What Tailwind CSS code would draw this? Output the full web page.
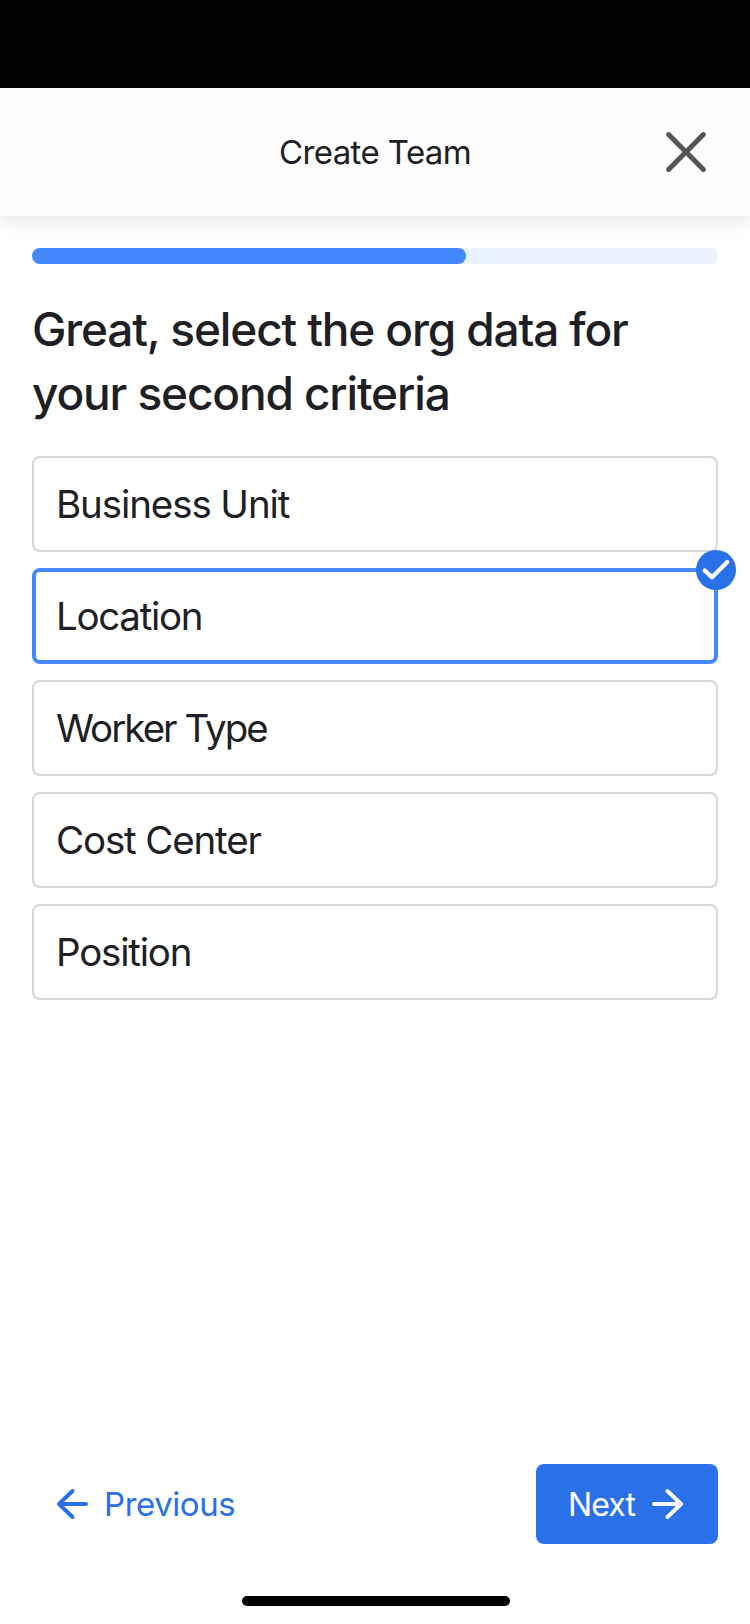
<!DOCTYPE html>
<html lang="en">
<head>
<meta charset="utf-8">
<title>Create Team</title>
<script src="https://cdn.jsdelivr.net/npm/@tailwindcss/browser@4"></script>
</head>
<body class="bg-white">
<div class="flex h-[1624px] w-[750px] flex-col overflow-hidden bg-white font-['Inter',sans-serif] text-[#202024]">
  <div class="h-[88px] shrink-0 bg-black"></div>
  <header class="grid h-32 shrink-0 grid-cols-[1fr_auto_1fr] items-center bg-[#fdfdfd] shadow-[0_8px_16px_rgba(0,0,0,0.08)]">
    <span></span>
    <h1 class="text-[33px] leading-10 tracking-[-0.6px]">Create Team</h1>
    <button class="mr-10 justify-self-end" aria-label="Close">
      <svg class="block size-12" viewBox="0 0 48 48" fill="none" stroke="#555558" stroke-width="5" stroke-linecap="round"><path d="M6.6 6.6 41.4 41.4M41.4 6.6 6.6 41.4"/></svg>
    </button>
  </header>
  <main class="flex flex-1 flex-col px-8 pt-8">
    <div class="h-4 rounded-full bg-[#eaf1ff]"><div class="h-4 w-[434px] rounded-full bg-[#4487ff]"></div></div>
    <h2 class="mt-[33px] text-[46px] leading-[64px] font-medium tracking-[-1.14px] whitespace-nowrap">Great, select the org data for<br>your second criteria</h2>
    <ul class="mt-[31px] flex flex-col gap-4 text-[38.5px]">
      <li class="flex h-24 items-center rounded-lg border-2 border-[#d5d5dc] px-[22px] pt-0.5"><span class="tracking-[-1.1px]">Business Unit</span></li>
      <li class="relative flex h-24 items-center rounded-lg border-4 border-[#4487ff] px-5 pt-0.5"><span class="tracking-[-1.3px]">Location</span>
        <svg class="absolute -top-[22px] -right-[22px] size-10" viewBox="0 0 40 40" fill="none"><circle cx="20" cy="20" r="20" fill="#2a70e8"/><path d="M8.700 20.600 16 27.200 31.300 12" stroke="#fff" stroke-width="4.300" stroke-linecap="round" stroke-linejoin="round"/></svg>
      </li>
      <li class="flex h-24 items-center rounded-lg border-2 border-[#d5d5dc] px-[22px] pt-0.5"><span class="tracking-[-1.95px]">Worker Type</span></li>
      <li class="flex h-24 items-center rounded-lg border-2 border-[#d5d5dc] px-[22px] pt-0.5"><span class="tracking-[-1.15px]">Cost Center</span></li>
      <li class="flex h-24 items-center rounded-lg border-2 border-[#d5d5dc] px-[22px] pt-0.5"><span class="tracking-[-1.2px]">Position</span></li>
    </ul>
  </main>
  <footer class="flex h-40 shrink-0 flex-col px-8">
    <div class="flex h-20 items-center justify-between">
      <button class="flex items-center gap-4 pl-6 text-[33px] text-[#2a70e8]">
        <svg class="block size-8" viewBox="0 0 32 32" fill="none" stroke="currentColor" stroke-width="4" stroke-linecap="round" stroke-linejoin="round"><path d="M30 16H3M16.500 3 3 16l13.500 13"/></svg>
        <span class="pt-0.5 tracking-[-0.45px]">Previous</span>
      </button>
      <button class="flex h-20 w-[182px] items-center justify-between rounded-lg bg-[#2a70e8] pr-[34px] pl-8 text-[32px] text-white">
        <span class="pt-0.5 tracking-[-0.9px]">Next</span>
        <svg class="block size-8" viewBox="0 0 32 32" fill="none" stroke="currentColor" stroke-width="4" stroke-linecap="round" stroke-linejoin="round"><path d="M2 16h27M15.500 3 29 16 15.500 29"/></svg>
      </button>
    </div>
    <div class="mt-[52px] ml-[210px] h-2.5 w-[268px] rounded-full bg-black"></div>
  </footer>
</div>
</body>
</html>
